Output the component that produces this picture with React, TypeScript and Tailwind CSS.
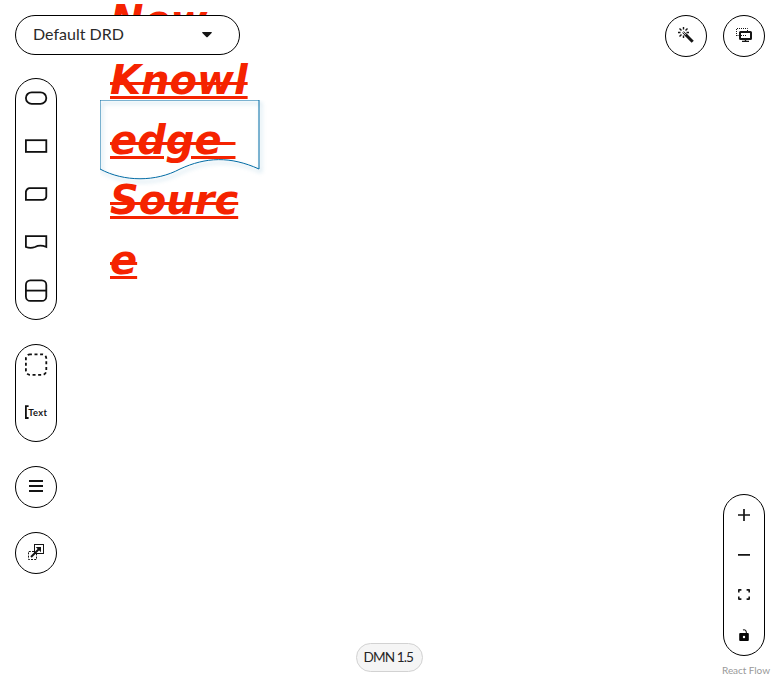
import React from "react";

const panel = "border border-black bg-white";
const round =
  "flex h-[42px] w-[42px] shrink-0 items-center justify-center rounded-full border border-black bg-white pb-[2px]";

function KnowledgeSourceNode() {
  const lines = ["New ", "Knowl", "edge ", "Sourc", "e"];
  return (
    <div className="absolute left-[100px] top-[100px] h-20 w-40">
      <svg className="absolute left-0 top-0 overflow-hidden" width="170" height="90" fill="none">
        <path
          d="M0 0H159V69C130 56 106 57 80 69C56 82 24 82 0 69Z"
          stroke="#006ba4"
          strokeWidth="1"
          style={{ filter: "drop-shadow(2px 3px 2px rgba(0,107,164,.36))" }}
        />
      </svg>
      <div className="absolute -top-[110px] left-[10px] whitespace-pre font-['DejaVu_Sans',sans-serif] font-bold italic text-[#f52300]">
        {lines.map((line, i) => (
          <div key={i} className="text-[43px] leading-[0px] [text-decoration:line-through_3px]">
            <span className="text-[40px] leading-[60px] [text-decoration:underline_3px]">{line}</span>
          </div>
        ))}
      </div>
    </div>
  );
}

function Palette() {
  return (
    <div className={`${panel} h-[242px] w-[42px] rounded-[21px]`}>
      <svg width="40" height="240" fill="none" stroke="#101010" strokeWidth="1.8">
        <rect x="9.9" y="13.3" width="20.4" height="11.6" rx="5.8" />
        <rect x="9.9" y="61.2" width="20.4" height="11.7" />
        <path d="M13.2 109.2H30.3V117.6Q30 120.3 27 120.9H9.9V112.8Q10.5 109.8 13.2 109.2Z" />
        <path d="M9.9 157.2H30.3V168C25 165.8 22 166.5 19 168C16 169.2 13 169.2 9.9 168Z" />
        <rect x="9.9" y="201.4" width="20.4" height="20.5" rx="4.5" />
        <path d="M9.9 211.6H30.3" />
      </svg>
    </div>
  );
}

function Artifacts() {
  return (
    <div className={`${panel} h-[98px] w-[42px] rounded-[21px]`}>
      <svg width="40" height="96" fill="none" stroke="#101010" strokeWidth="1.8">
        <rect x="9.9" y="9.4" width="20.4" height="20.4" rx="4" strokeDasharray="3 2.6" strokeDashoffset="1" />
        <path d="M12.6 61.2H9.9V73H12.6" />
        <text
          x="12.2"
          y="70.8"
          fill="#151515"
          stroke="none"
          fontSize="9.3"
          fontWeight="700"
          textLength="18.7"
          className="font-['Lato',sans-serif]"
        >
          Text
        </text>
      </svg>
    </div>
  );
}

function WandIcon() {
  return (
    <svg width="16" height="16" fill="none" stroke="#151515">
      <path d="M7.5 7.5L14.7 14.7" strokeWidth="3" />
      <path d="M5 5L8.5 8.5" strokeWidth="2.2" />
      <path d="M5 5L7.8 7.8" stroke="white" strokeWidth=".8" />
      <path
        d="M5.5 0V2.5M1.5 1.5L3.5 3.5M0 5.5H2.5M1.5 9.5L3.5 7.5M5.5 8.5V11M9.5 1.5L7.5 3.5M8.5 5.5H11"
        strokeWidth="1.4"
      />
    </svg>
  );
}

function ScreenIcon() {
  return (
    <svg width="16" height="16" fill="none" stroke="#151515">
      <path d="M.5 9V1.5H11.5V4M.5 8.5H3M5 8.5H11" strokeDasharray="1 1" />
      <rect x="4" y="5" width="11" height="7" rx=".5" strokeWidth="2" />
      <path d="M9.5 12V14M6 14.4H13" strokeWidth="1.4" />
    </svg>
  );
}

function ExpandIcon() {
  return (
    <svg width="16" height="16" fill="none" stroke="#151515">
      <rect x="6.5" y=".5" width="9" height="9" />
      <path d="M6 7.5H.5V15.5H8.5V10" strokeDasharray="2 1.2" />
      <path d="M3 13L11 5" strokeWidth="2" />
      <path d="M7.7 3H13V8.3Z" fill="#151515" stroke="none" />
    </svg>
  );
}

function Controls() {
  return (
    <div className={`${panel} h-[162px] w-[42px] rounded-[21px]`}>
      <svg width="40" height="160" fill="none" stroke="#151515" strokeWidth="1.7">
        <path d="M14 20H26M20 14V26M14 59.8H26" />
        <path
          d="M14.8 97.5V94.9H17.4M22.6 94.9H25.2V97.5M25.2 101.5V104.1H22.6M17.4 104.1H14.8V101.5"
          strokeWidth="1.6"
          strokeLinejoin="round"
        />
        <rect x="15.2" y="138" width="9.6" height="8" rx="1" fill="#050505" stroke="none" />
        <path d="M19 135C20.5 134.4 22.4 135 22.4 138" strokeWidth="1.1" />
        <circle cx="20" cy="142" r="1.2" fill="white" stroke="none" />
      </svg>
    </div>
  );
}

export default function App() {
  return (
    <main className="relative h-[680px] w-[780px] overflow-hidden bg-white font-['Lato',sans-serif] text-[#151515]">
      <KnowledgeSourceNode />
      <div className="relative flex h-full flex-col">
        <header className="flex h-[78px] shrink-0 items-start justify-between px-[15px] pt-[15px]">
          <button className={`${panel} flex h-10 w-[225px] items-center justify-between rounded-full pl-[17px] pr-[27px]`}>
            <svg width="92" height="24" fill="#2a2a2a">
              <text x="0" y="17" fontSize="16" textLength="91" className="font-['Lato',sans-serif]">
                Default DRD
              </text>
            </svg>
            <svg width="10" height="6" fill="#151515">
              <path d="M.3 0H9.7Q10 .8 9.4 1.3L5.7 5Q5 5.6 4.3 5L.6 1.3Q0 .8 .3 0Z" />
            </svg>
          </button>
          <div className="flex gap-4">
            <button className={round}><WandIcon /></button>
            <button className={round}><ScreenIcon /></button>
          </div>
        </header>
        <div className="flex grow items-start justify-between px-[15px]">
          <aside className="flex flex-col gap-6">
            <Palette />
            <Artifacts />
            <button className={round}>
              <svg width="14" height="14" stroke="#151515" strokeWidth="2.1">
                <path d="M0 2H14M0 7H14M0 12H14" />
              </svg>
            </button>
            <button className={round}><ExpandIcon /></button>
          </aside>
          <div className="-ml-[2px] mt-[565px] flex h-[29px] w-[67px] items-center justify-center rounded-full border border-[#d2d2d2] bg-[#f5f5f5]">
            <svg width="52" height="20" fill="#252525">
              <text x="0.5" y="14" fontSize="13.6" textLength="50.5" className="font-['Lato',sans-serif]">
                DMN 1.5
              </text>
            </svg>
          </div>
          <div className="mt-[416px] flex w-[42px] flex-col">
            <Controls />
            <svg className="-ml-[2px] mt-[7px] w-[50px] overflow-visible" height="14" fill="#999">
              <text x="1" y="11" fontSize="10" textLength="48" className="font-['Lato',sans-serif]">
                React Flow
              </text>
            </svg>
          </div>
        </div>
      </div>
    </main>
  );
}
